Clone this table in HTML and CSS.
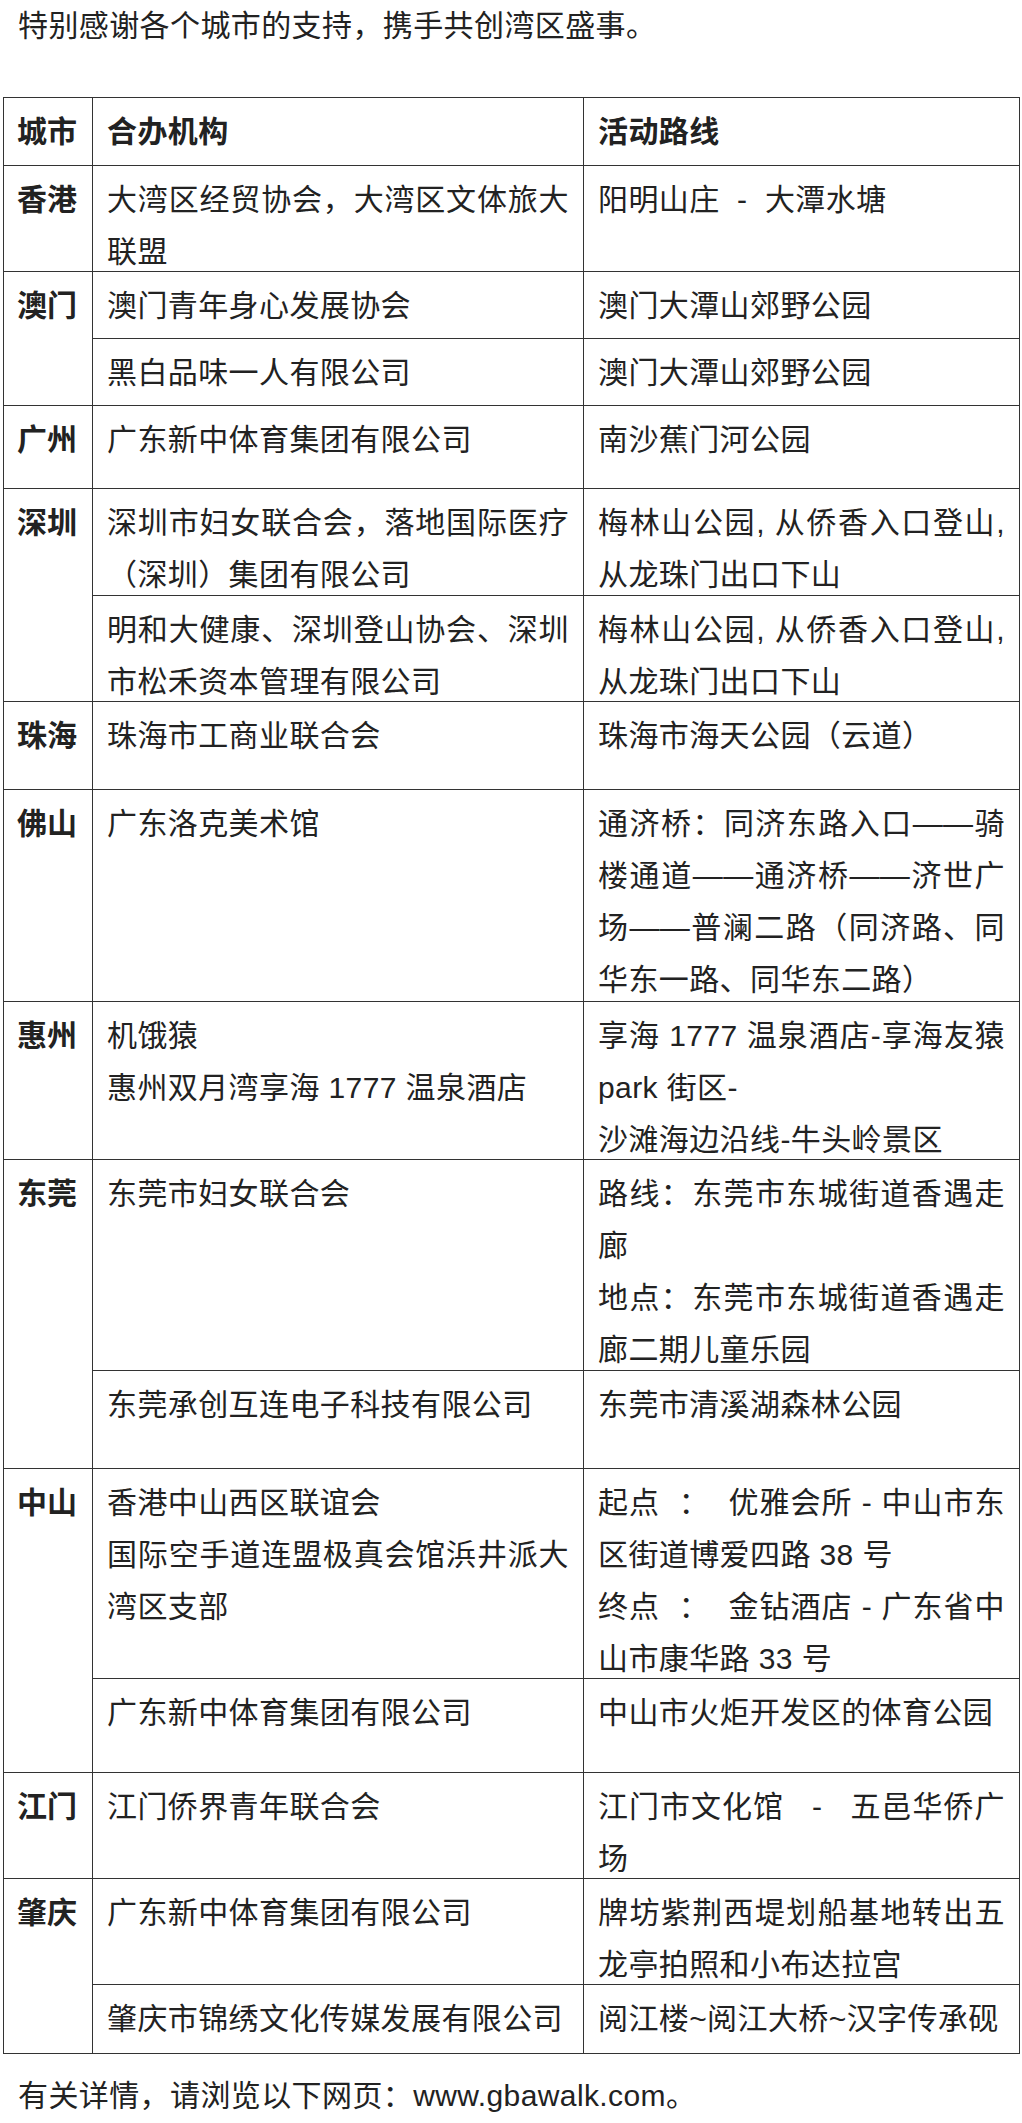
FILE: index.html
```html
<!DOCTYPE html>
<html lang="zh-CN">
<head>
<meta charset="utf-8">
<title>大湾区城市合办机构</title>
<link rel="stylesheet" href="styles.css">
</head>
<body>
<p class="intro">特别感谢各个城市的支持，携手共创湾区盛事。</p>
<table class="tbl">
  <colgroup>
    <col class="col-city">
    <col class="col-org">
    <col class="col-route">
  </colgroup>
  <thead>
    <tr class="h66">
      <th class="city"><div class="c">城市</div></th>
      <th><div class="c">合办机构</div></th>
      <th><div class="c">活动路线</div></th>
    </tr>
  </thead>
  <tbody>
    <tr>
      <td class="city"><div class="c">香港</div></td>
      <td><div class="c">大湾区经贸协会，大湾区文体旅大联盟</div></td>
      <td><div class="c">阳明山庄&nbsp; - &nbsp;大潭水塘</div></td>
    </tr>
    <tr class="h65">
      <td class="city" rowspan="2"><div class="c">澳门</div></td>
      <td><div class="c">澳门青年身心发展协会</div></td>
      <td><div class="c">澳门大潭山郊野公园</div></td>
    </tr>
    <tr class="h65">
      <td><div class="c">黑白品味一人有限公司</div></td>
      <td><div class="c">澳门大潭山郊野公园</div></td>
    </tr>
    <tr class="h81">
      <td class="city"><div class="c">广州</div></td>
      <td><div class="c">广东新中体育集团有限公司</div></td>
      <td><div class="c">南沙蕉门河公园</div></td>
    </tr>
    <tr class="h105">
      <td class="city" rowspan="2"><div class="c">深圳</div></td>
      <td><div class="c">深圳市妇女联合会，落地国际医疗（深圳）集团有限公司</div></td>
      <td><div class="c">梅林山公园, 从侨香入口登山, 从龙珠门出口下山</div></td>
    </tr>
    <tr>
      <td><div class="c">明和大健康、深圳登山协会、深圳市松禾资本管理有限公司</div></td>
      <td><div class="c">梅林山公园, 从侨香入口登山, 从龙珠门出口下山</div></td>
    </tr>
    <tr class="h86">
      <td class="city"><div class="c">珠海</div></td>
      <td><div class="c">珠海市工商业联合会</div></td>
      <td><div class="c">珠海市海天公园（云道）</div></td>
    </tr>
    <tr class="h210">
      <td class="city"><div class="c">佛山</div></td>
      <td><div class="c">广东洛克美术馆</div></td>
      <td><div class="c">通济桥：同济东路入口——骑楼通道——通济桥——济世广场——普澜二路（同济路、同华东一路、同华东二路）</div></td>
    </tr>
    <tr>
      <td class="city"><div class="c">惠州</div></td>
      <td><div class="c">机饿猿<br>惠州双月湾享海 1777 温泉酒店</div></td>
      <td><div class="c">享海 1777 温泉酒店-享海友猿 park 街区-<br>沙滩海边沿线-牛头岭景区</div></td>
    </tr>
    <tr class="h209">
      <td class="city" rowspan="2"><div class="c">东莞</div></td>
      <td><div class="c">东莞市妇女联合会</div></td>
      <td><div class="c">路线：东莞市东城街道香遇走廊<br>地点：东莞市东城街道香遇走廊二期儿童乐园</div></td>
    </tr>
    <tr class="h96">
      <td><div class="c">东莞承创互连电子科技有限公司</div></td>
      <td><div class="c">东莞市清溪湖森林公园</div></td>
    </tr>
    <tr>
      <td class="city" rowspan="2"><div class="c">中山</div></td>
      <td><div class="c">香港中山西区联谊会<br>国际空手道连盟极真会馆浜井派大湾区支部</div></td>
      <td><div class="c">起点&nbsp;&nbsp;：&nbsp;&nbsp;优雅会所 - 中山市东区街道博爱四路 38 号<br>终点&nbsp;&nbsp;：&nbsp;&nbsp;金钻酒店 - 广东省中山市康华路 33 号</div></td>
    </tr>
    <tr class="h92">
      <td><div class="c">广东新中体育集团有限公司</div></td>
      <td><div class="c">中山市火炬开发区的体育公园</div></td>
    </tr>
    <tr>
      <td class="city"><div class="c">江门</div></td>
      <td><div class="c">江门侨界青年联合会</div></td>
      <td><div class="c">江门市文化馆&nbsp;&nbsp; - &nbsp;&nbsp;五邑华侨广场</div></td>
    </tr>
    <tr>
      <td class="city" rowspan="2"><div class="c">肇庆</div></td>
      <td><div class="c">广东新中体育集团有限公司</div></td>
      <td><div class="c">牌坊紫荆西堤划船基地转出五龙亭拍照和小布达拉宫</div></td>
    </tr>
    <tr class="h67">
      <td><div class="c">肇庆市锦绣文化传媒发展有限公司</div></td>
      <td><div class="c">阅江楼~阅江大桥~汉字传承砚</div></td>
    </tr>
  </tbody>
</table>
<p class="outro">有关详情，请浏览以下网页：www.gbawalk.com。</p>
</body>
</html>
```

FILE: styles.css
```css
html, body {
  margin: 0;
  padding: 0;
  background: #ffffff;
}

body {
  font-family: "Liberation Sans", "Noto Sans CJK SC", sans-serif;
  font-size: 30px;
  line-height: 52px;
  color: #222222;
  letter-spacing: 0.4px;
  text-spacing-trim: space-all;
  width: 1022px;
}

.intro {
  margin: 0;
  padding: 0 0 0 18px;
}

.outro {
  margin: 16px 0 0 0;
  padding: 0 0 0 18px;
}

.tbl {
  margin: 45px 0 0 3px;
  width: 1016px;
  table-layout: fixed;
  border-collapse: collapse;
  border: 1px solid #333333;
}

.col-city { width: 89px; }
.col-org { width: 491px; }
.col-route { width: 436px; }

.tbl th,
.tbl td {
  border: 1px solid #333333;
  padding: 8px 14px 0 14px;
  vertical-align: top;
  text-align: justify;
  font-weight: 400;
}

.tbl th {
  font-weight: 700;
  text-align: left;
}

.tbl .city {
  font-weight: 700;
  text-align: left;
  white-space: nowrap;
  letter-spacing: 0;
  padding-left: 13px;
  padding-right: 0;
}

.c {
  margin-bottom: -7px;
}

.h65 td:not(.city) > .c { min-height: 65px; }
.h66 th > .c { min-height: 66px; }
.h67 td:not(.city) > .c { min-height: 67px; }
.h81 td:not(.city) > .c { min-height: 81px; }
.h86 td:not(.city) > .c { min-height: 86px; }
.h92 td:not(.city) > .c { min-height: 92px; }
.h96 td:not(.city) > .c { min-height: 96px; }
.h105 td:not(.city) > .c { min-height: 105px; }
.h209 td:not(.city) > .c { min-height: 209px; }
.h210 td:not(.city) > .c { min-height: 210px; }
```
